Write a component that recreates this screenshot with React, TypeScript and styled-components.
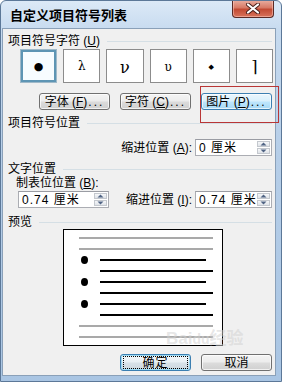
import styled, { createGlobalStyle } from 'styled-components'

const GlobalStyle = createGlobalStyle`
	html, body {
		margin: 0;
		padding: 0;
		background: #ffffff;
	}
	body {
		font-family: 'Liberation Sans', 'Noto Sans CJK SC', sans-serif;
		font-size: 12px;
		color: #000;
	}
`

const glyphs = [
	{ char: '●', size: 11, offset: 0 },
	{ char: 'λ', size: 12, offset: 0 },
	{ char: 'ν', size: 16, offset: 2 },
	{ char: 'υ', size: 12, offset: 1 },
	{ char: '◆', size: 7, offset: 1 },
	{ char: '⌉', size: 16, offset: 1 },
]

type PreviewLine = { kind: 'gray' | 'black'; width: number; bullet?: boolean }

const previewLines: PreviewLine[] = [
	{ kind: 'gray', width: 134 },
	{ kind: 'gray', width: 134 },
	{ kind: 'black', width: 106, bullet: true },
	{ kind: 'black', width: 113 },
	{ kind: 'black', width: 106, bullet: true },
	{ kind: 'black', width: 113 },
	{ kind: 'black', width: 106, bullet: true },
	{ kind: 'black', width: 113 },
	{ kind: 'gray', width: 134 },
	{ kind: 'gray', width: 134 },
]

function Spinner() {
	return (
		<SpinBox>
			<SpinHalf>
				<svg width='7' height='4' viewBox='0 0 7 4'>
					<path d='M0.5 3.5 L3.5 0.5 L6.5 3.5 Z' fill='#4f6383' />
				</svg>
			</SpinHalf>
			<SpinHalf>
				<svg width='7' height='4' viewBox='0 0 7 4'>
					<path d='M0.5 0.5 L3.5 3.5 L6.5 0.5 Z' fill='#4f6383' />
				</svg>
			</SpinHalf>
		</SpinBox>
	)
}

function Header({ children }: { children: React.ReactNode }) {
	return (
		<HeaderRow>
			<span>{children}</span>
			<Rule />
		</HeaderRow>
	)
}

export default function App() {
	return (
		<>
			<GlobalStyle />
			<Frame>
				<TitleBar>
					<Title>自定义项目符号列表</Title>
					<CloseButton>
						<svg width='16' height='11' viewBox='0 0 16 11'>
							<path d='M3 1.5 L13 9.5 M13 1.5 L3 9.5' stroke='#4a1f1a' strokeWidth='4' strokeLinecap='round' />
							<path d='M3 1.5 L13 9.5 M13 1.5 L3 9.5' stroke='#ffffff' strokeWidth='2.2' strokeLinecap='round' />
						</svg>
					</CloseButton>
				</TitleBar>

				<Body>
					<Header>
						项目符号字符 (<u>U</u>)
					</Header>

					<GlyphGrid>
						{glyphs.map((g, i) => (
							<GlyphBox key={i} $selected={i === 0}>
								<Glyph $size={g.size} $offset={g.offset}>
									{g.char}
								</Glyph>
							</GlyphBox>
						))}
					</GlyphGrid>

					<ButtonRow>
						<Button>
							字体 (<u>F</u>)<Dots>...</Dots>
						</Button>
						<Button>
							字符 (<u>C</u>)<Dots>...</Dots>
						</Button>
						<Button $hover>
							图片 (<u>P</u>)<Dots>...</Dots>
						</Button>
					</ButtonRow>

					<Spaced $top={7}>
						<Header>项目符号位置</Header>
					</Spaced>

					<FieldRow $top={10}>
						<FieldLabel>
							缩进位置 (<u>A</u>):
						</FieldLabel>
						<Input $width={77}>
							<InputText>0 厘米</InputText>
							<Spinner />
						</Input>
					</FieldRow>

					<Spaced $top={7}>
						<Header>文字位置</Header>
					</Spaced>

					<SubLabel>
						制表位位置 (<u>B</u>):
					</SubLabel>

					<FieldRow $top={2}>
						<Input $width={91} $left={10}>
							<InputText>0.74 厘米</InputText>
							<Spinner />
						</Input>
						<FieldLabel $grow>
							缩进位置 (<u>I</u>):
						</FieldLabel>
						<Input $width={77}>
							<InputText>0.74 厘米</InputText>
							<Spinner />
						</Input>
					</FieldRow>

					<Spaced $top={8}>
						<Header>预览</Header>
					</Spaced>

					<Preview>
						{previewLines.map((l, i) => (
							<PreviewRow key={i}>
								{l.bullet && <Dot />}
								<Stroke $gray={l.kind === 'gray'} $width={l.width} $bullet={!!l.bullet} />
							</PreviewRow>
						))}
					</Preview>

					<Footer>
						<Button $default>
							<FocusRing>确定</FocusRing>
						</Button>
						<Button>取消</Button>
					</Footer>
				</Body>

				<Watermark>
					Bai<Paw>du</Paw>经验
				</Watermark>
				<Annotation />
			</Frame>
		</>
	)
}

const Frame = styled.div`
	position: relative;
	width: 282px;
	height: 382px;
	box-sizing: border-box;
	border: 1px solid #5c7898;
	border-radius: 6px 6px 0 0;
	background: linear-gradient(180deg, #dce9f7 0%, #c6daef 8%, #b6cee8 40%, #a9c5e3 100%);
	display: flex;
	flex-direction: column;
	overflow: hidden;
`

const TitleBar = styled.div`
	height: 27px;
	display: flex;
	justify-content: space-between;
	align-items: flex-start;
	flex-shrink: 0;
`

const Title = styled.div`
	padding: 8px 0 0 9px;
	font-size: 13px;
	font-weight: bold;
	line-height: 14px;
	color: #000;
`

const CloseButton = styled.div`
	width: 42px;
	height: 18px;
	margin: -1px 7px 0 0;
	box-sizing: border-box;
	border: 1px solid #5a2a25;
	border-top: none;
	border-radius: 0 0 4px 4px;
	background: linear-gradient(180deg, #eab0a2 0%, #d77a66 45%, #c24a33 55%, #d8735b 100%);
	display: flex;
	align-items: center;
	justify-content: center;
	box-shadow: inset 0 0 0 1px rgba(255, 210, 200, 0.5);
`

const Body = styled.div`
	flex: 1;
	margin: 0 5px 5px 1px;
	border: 1px solid #8aa0b8;
	background: #f0f0f0;
	padding: 0 3px 0 5px;
	display: flex;
	flex-direction: column;
`

const HeaderRow = styled.div`
	display: flex;
	align-items: center;
	height: 12px;
	line-height: 12px;
	margin-top: 6px;
	font-size: 12px;
	white-space: nowrap;
`

const Rule = styled.div`
	flex: 1;
	height: 1px;
	margin-left: 7px;
	background: #d5dfe5;
`

const Spaced = styled.div<{ $top: number }>`
	margin-top: ${p => p.$top - 6}px;
`

const GlyphGrid = styled.div`
	display: grid;
	grid-template-columns: repeat(6, 1fr);
	gap: 6px;
	width: 253px;
	height: 34px;
	margin: 2px 0 0 12px;
`

const GlyphBox = styled.div<{ $selected?: boolean }>`
	box-sizing: border-box;
	background: #ffffff;
	border: 1px solid #8c8c8c;
	display: flex;
	align-items: center;
	justify-content: center;
	${p =>
		p.$selected &&
		`
		border: 3px solid #5e95b4;
		outline: 1px solid #9fb9c9;
		outline-offset: -1px;
		background: #f7fcff;
	`}
`

const Glyph = styled.span<{ $size: number; $offset: number }>`
	font-family: 'DejaVu Serif', 'Liberation Serif', serif;
	font-size: ${p => p.$size}px;
	line-height: 1;
	position: relative;
	top: ${p => p.$offset}px;
`

const ButtonRow = styled.div`
	display: flex;
	justify-content: flex-end;
	gap: 10px;
	margin-top: 10px;
`

const Button = styled.div<{ $hover?: boolean; $default?: boolean }>`
	width: 71px;
	height: 17px;
	box-sizing: border-box;
	border: 1px solid #707070;
	border-radius: 3px;
	background: linear-gradient(180deg, #f4f4f4 0%, #ececec 48%, #dcdcdc 52%, #d0d0d0 100%);
	display: flex;
	align-items: center;
	justify-content: center;
	font-size: 12px;
	line-height: 12px;
	white-space: nowrap;
	box-shadow: inset 0 0 0 1px rgba(255, 255, 255, 0.7);
	${p =>
		p.$hover &&
		`
		border-color: #3c7fb1;
		background: linear-gradient(180deg, #eaf6fd 0%, #d9f0fc 48%, #bee6fd 52%, #a7d9f5 100%);
	`}
	${p =>
		p.$default &&
		`
		border-color: #3c7fb1;
		box-shadow: inset 0 0 0 1px #9edcf5;
		background: linear-gradient(180deg, #f2f7fa 0%, #e8eff3 48%, #d8e2e8 52%, #cdd8df 100%);
	`}
`

const Dots = styled.span`
	letter-spacing: 2px;
	margin-left: 1px;
`

const FocusRing = styled.span`
	display: flex;
	align-items: center;
	justify-content: center;
	width: 63px;
	height: 11px;
	border: 1px dotted #000;
	letter-spacing: 1px;
`

const FieldRow = styled.div<{ $top: number }>`
	display: flex;
	justify-content: flex-end;
	align-items: center;
	height: 17px;
	margin-top: ${p => p.$top}px;
`

const FieldLabel = styled.div<{ $grow?: boolean }>`
	${p => p.$grow && 'flex: 1;'}
	text-align: right;
	margin-right: 3px;
	font-size: 12px;
	line-height: 12px;
	white-space: nowrap;
`

const SubLabel = styled.div`
	margin: 2px 0 0 8px;
	height: 12px;
	line-height: 12px;
	font-size: 12px;
`

const Input = styled.div<{ $width: number; $left?: number }>`
	width: ${p => p.$width}px;
	height: 17px;
	margin-left: ${p => p.$left ?? 0}px;
	box-sizing: border-box;
	border: 1px solid #abadb3;
	border-top-color: #9a9ca3;
	background: #ffffff;
	display: flex;
	align-items: center;
	padding: 0 1px 0 3px;
`

const InputText = styled.span`
	flex: 1;
	font-size: 12px;
	line-height: 12px;
	letter-spacing: 1px;
	white-space: nowrap;
`

const SpinBox = styled.div`
	width: 13px;
	height: 13px;
	display: flex;
	flex-direction: column;
	gap: 1px;
`

const SpinHalf = styled.div`
	flex: 1;
	box-sizing: border-box;
	border: 1px solid #c4c8ce;
	background: linear-gradient(180deg, #f6f7f9 0%, #dfe3e8 100%);
	display: flex;
	align-items: center;
	justify-content: center;
`

const Preview = styled.div`
	width: 160px;
	height: 117px;
	box-sizing: border-box;
	margin: 1px 0 0 55px;
	border: 1px solid #000;
	background: #ffffff;
	padding: 7px 0 0 15px;
	display: flex;
	flex-direction: column;
	gap: 9px;
`

const PreviewRow = styled.div`
	display: flex;
	align-items: center;
	height: 2px;
`

const Dot = styled.div`
	width: 7px;
	height: 8px;
	margin-left: 2px;
	border-radius: 50%;
	background: #000;
	flex-shrink: 0;
`

const Stroke = styled.div<{ $gray: boolean; $width: number; $bullet: boolean }>`
	width: ${p => p.$width}px;
	height: 2px;
	margin-left: ${p => (p.$bullet ? 12 : p.$gray ? 0 : 21)}px;
	background: ${p => (p.$gray ? '#a9a9a9' : '#000')};
`

const Footer = styled.div`
	display: flex;
	justify-content: flex-end;
	gap: 10px;
	margin-top: 8px;
`

const Watermark = styled.div`
	position: absolute;
	left: 165px;
	top: 328px;
	font-family: 'Liberation Sans', 'Noto Sans CJK SC', sans-serif;
	font-size: 17px;
	line-height: 20px;
	font-weight: bold;
	color: rgba(210, 210, 210, 0.55);
	white-space: nowrap;
	pointer-events: none;
`

const Paw = styled.span`
	font-size: 14px;
`

const Annotation = styled.div`
	position: absolute;
	left: 199px;
	top: 85px;
	width: 79px;
	height: 37px;
	box-sizing: border-box;
	border: 1px solid #b93636;
	pointer-events: none;
`
